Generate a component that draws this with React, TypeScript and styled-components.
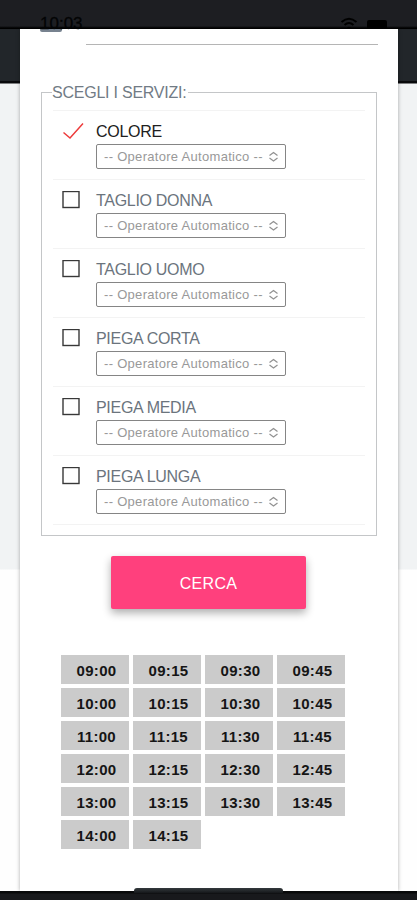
import React from "react";
import styled, { createGlobalStyle } from "styled-components";

const GlobalStyle = createGlobalStyle`
  * { box-sizing: border-box; }
  body { margin: 0; background: #fff; font-family: "Liberation Sans", Arial, sans-serif; }
`;

const Screen = styled.div`
  width: 417px;
  height: 900px;
  overflow: hidden;
  display: flex;
  flex-direction: column;
  background: linear-gradient(#22262a 0 81px, #08090b 81px 83px, #f1f3f4 84px 569px, #fefefe 570px);
`;

const StatusBar = styled.header`
  position: relative;
  z-index: 1;
  height: 29px;
  flex: none;
  display: flex;
  justify-content: space-between;
  padding: 14px 30px 0 40px;
  background: linear-gradient(#1d1e22 26px, #000 28px);
`;

const Clock = styled.span`
  font-size: 17px;
  line-height: 19px;
  color: #030405;
  -webkit-text-stroke: 0.3px #030405;
`;

const StatusIcons = styled.div`
  display: flex;
  gap: 9px;
  height: 15px;
  overflow: hidden;
`;

const Battery = styled.span`
  width: 20px;
  height: 12px;
  margin-top: 6px;
  border-radius: 2px;
  background: #000;
`;

const Card = styled.main`
  width: 378px;
  height: 862px;
  flex: none;
  margin-left: 20px;
  padding: 0 21px;
  background: #fff;
  box-shadow: 0 0 4px rgba(0, 0, 0, 0.32);
`;

const Tab = styled.div`
  width: 22px;
  height: 3px;
  margin-left: -1px;
  border-radius: 0 0 2px 2px;
  background: #77828f;
`;

const InputLine = styled.div`
  width: 292px;
  height: 13px;
  margin-left: 45px;
  border-bottom: 1px solid #b5b5b5;
`;

const Services = styled.fieldset`
  width: 336px;
  height: 453px;
  margin: 38px 0 0;
  padding: 9px 11px 0;
  min-width: 0;
  border: 1px solid #c4c6c8;
`;

const Legend = styled.legend`
  height: 18px;
  margin-left: -1px;
  padding: 0 1px 0 0;
  font-size: 16px;
  line-height: 19px;
  letter-spacing: -0.23px;
  white-space: nowrap;
  color: #717b85;
`;

const ServiceList = styled.div`
  width: 312px;
  border-bottom: 1px solid #f3f3f3;
`;

const ServiceRow = styled.div`
  height: 69px;
  display: grid;
  grid-template-columns: 34px 191px;
  padding: 12px 0 0 9px;
  border-top: 1px solid #f3f3f3;
`;

const Mark = styled.svg`
  width: 22px;
  height: 20px;
  display: block;
  margin-top: -1px;
`;

const Operator = styled.div``;

const Name = styled.div<{ $active: boolean }>`
  height: 21px;
  font-size: 16px;
  line-height: 18px;
  letter-spacing: -0.3px;
  white-space: nowrap;
  color: ${(p) => (p.$active ? "#202020" : "#6b747d")};
`;

const Select = styled.div`
  width: 190px;
  height: 25px;
  display: flex;
  align-items: center;
  justify-content: space-between;
  padding: 0 6px 0 7px;
  border: 1px solid #858585;
  border-radius: 2px;
  font-size: 13px;
  letter-spacing: 0.3px;
  white-space: nowrap;
  color: #999;
`;

const SearchButton = styled.button`
  display: block;
  width: 195px;
  height: 53px;
  margin: 20px 0 0 70px;
  padding: 2px 0 0;
  border: 0;
  border-radius: 2px;
  background: #ff407d;
  box-shadow: 0 4px 8px rgba(0, 0, 0, 0.32);
  font: 16px "Liberation Sans", Arial, sans-serif;
  letter-spacing: 0.3px;
  color: #fff;
`;

const Slots = styled.div`
  display: grid;
  grid-template-columns: repeat(4, 68px);
  grid-auto-rows: 29px;
  gap: 4px;
  margin: 46px 0 0 20px;
`;

const Slot = styled.div`
  padding-left: 3px;
  background: #cbcbcb;
  font-size: 15px;
  font-weight: 700;
  line-height: 31px;
  letter-spacing: 0.3px;
  text-align: center;
  color: #151515;
`;

const BottomBar = styled.footer`
  flex: 1;
  display: flex;
  justify-content: center;
  background: linear-gradient(#08090a 2px, #18191c 3px);
`;

const HomeHandle = styled.div`
  width: 149px;
  height: 5px;
  margin-top: -3px;
  border-radius: 3px 3px 0 0;
  background: linear-gradient(#343a3d, #15171a);
`;

const services = ["COLORE", "TAGLIO DONNA", "TAGLIO UOMO", "PIEGA CORTA", "PIEGA MEDIA", "PIEGA LUNGA"];
const slots = [9, 10, 11, 12, 13, 14].flatMap((h) =>
  (h === 14 ? ["00", "15"] : ["00", "15", "30", "45"]).map((m) => `${String(h).padStart(2, "0")}:${m}`)
);

const WifiIcon = () => (
  <svg width="18" height="16" viewBox="0 -1 18 16" fill="none" stroke="#000" strokeWidth="2">
    <path d="M1.5 7Q9 0.5 16.5 7M4.5 10Q9 6 13.5 10" />
    <path d="M7 12.5Q9 11 11 12.5L9 14.5Z" fill="#000" stroke="none" />
  </svg>
);

const ServiceMark = ({ checked }: { checked: boolean }) => (
  <Mark viewBox="0 0 22 20" fill="none">
    {checked ? (
      <path d="M1.5 10.5L8 16L21 1.5" stroke="#ed3b3b" strokeWidth="1.5" />
    ) : (
      <rect x="1" y="0.5" width="16" height="16" stroke="#383838" strokeWidth="1.4" />
    )}
  </Mark>
);

const Chevrons = () => (
  <svg width="11" height="12" viewBox="0 0 11 12" fill="none" stroke="#919191" strokeWidth="1.2">
    <path d="M1.5 4.5L5.5 1.5L9.5 4.5M1.5 7L5.5 10L9.5 7" />
  </svg>
);

export default function App() {
  return (
    <>
      <GlobalStyle />
      <Screen>
        <StatusBar>
          <Clock>10:03</Clock>
          <StatusIcons>
            <WifiIcon />
            <Battery />
          </StatusIcons>
        </StatusBar>
        <Card>
          <Tab />
          <InputLine />
          <Services>
            <Legend>SCEGLI I SERVIZI:</Legend>
            <ServiceList>
              {services.map((name, i) => (
                <ServiceRow key={name}>
                  <ServiceMark checked={i === 0} />
                  <Operator>
                    <Name $active={i === 0}>{name}</Name>
                    <Select>
                      <span>-- Operatore Automatico --</span>
                      <Chevrons />
                    </Select>
                  </Operator>
                </ServiceRow>
              ))}
            </ServiceList>
          </Services>
          <SearchButton>CERCA</SearchButton>
          <Slots>
            {slots.map((time) => (
              <Slot key={time}>{time}</Slot>
            ))}
          </Slots>
        </Card>
        <BottomBar>
          <HomeHandle />
        </BottomBar>
      </Screen>
    </>
  );
}
